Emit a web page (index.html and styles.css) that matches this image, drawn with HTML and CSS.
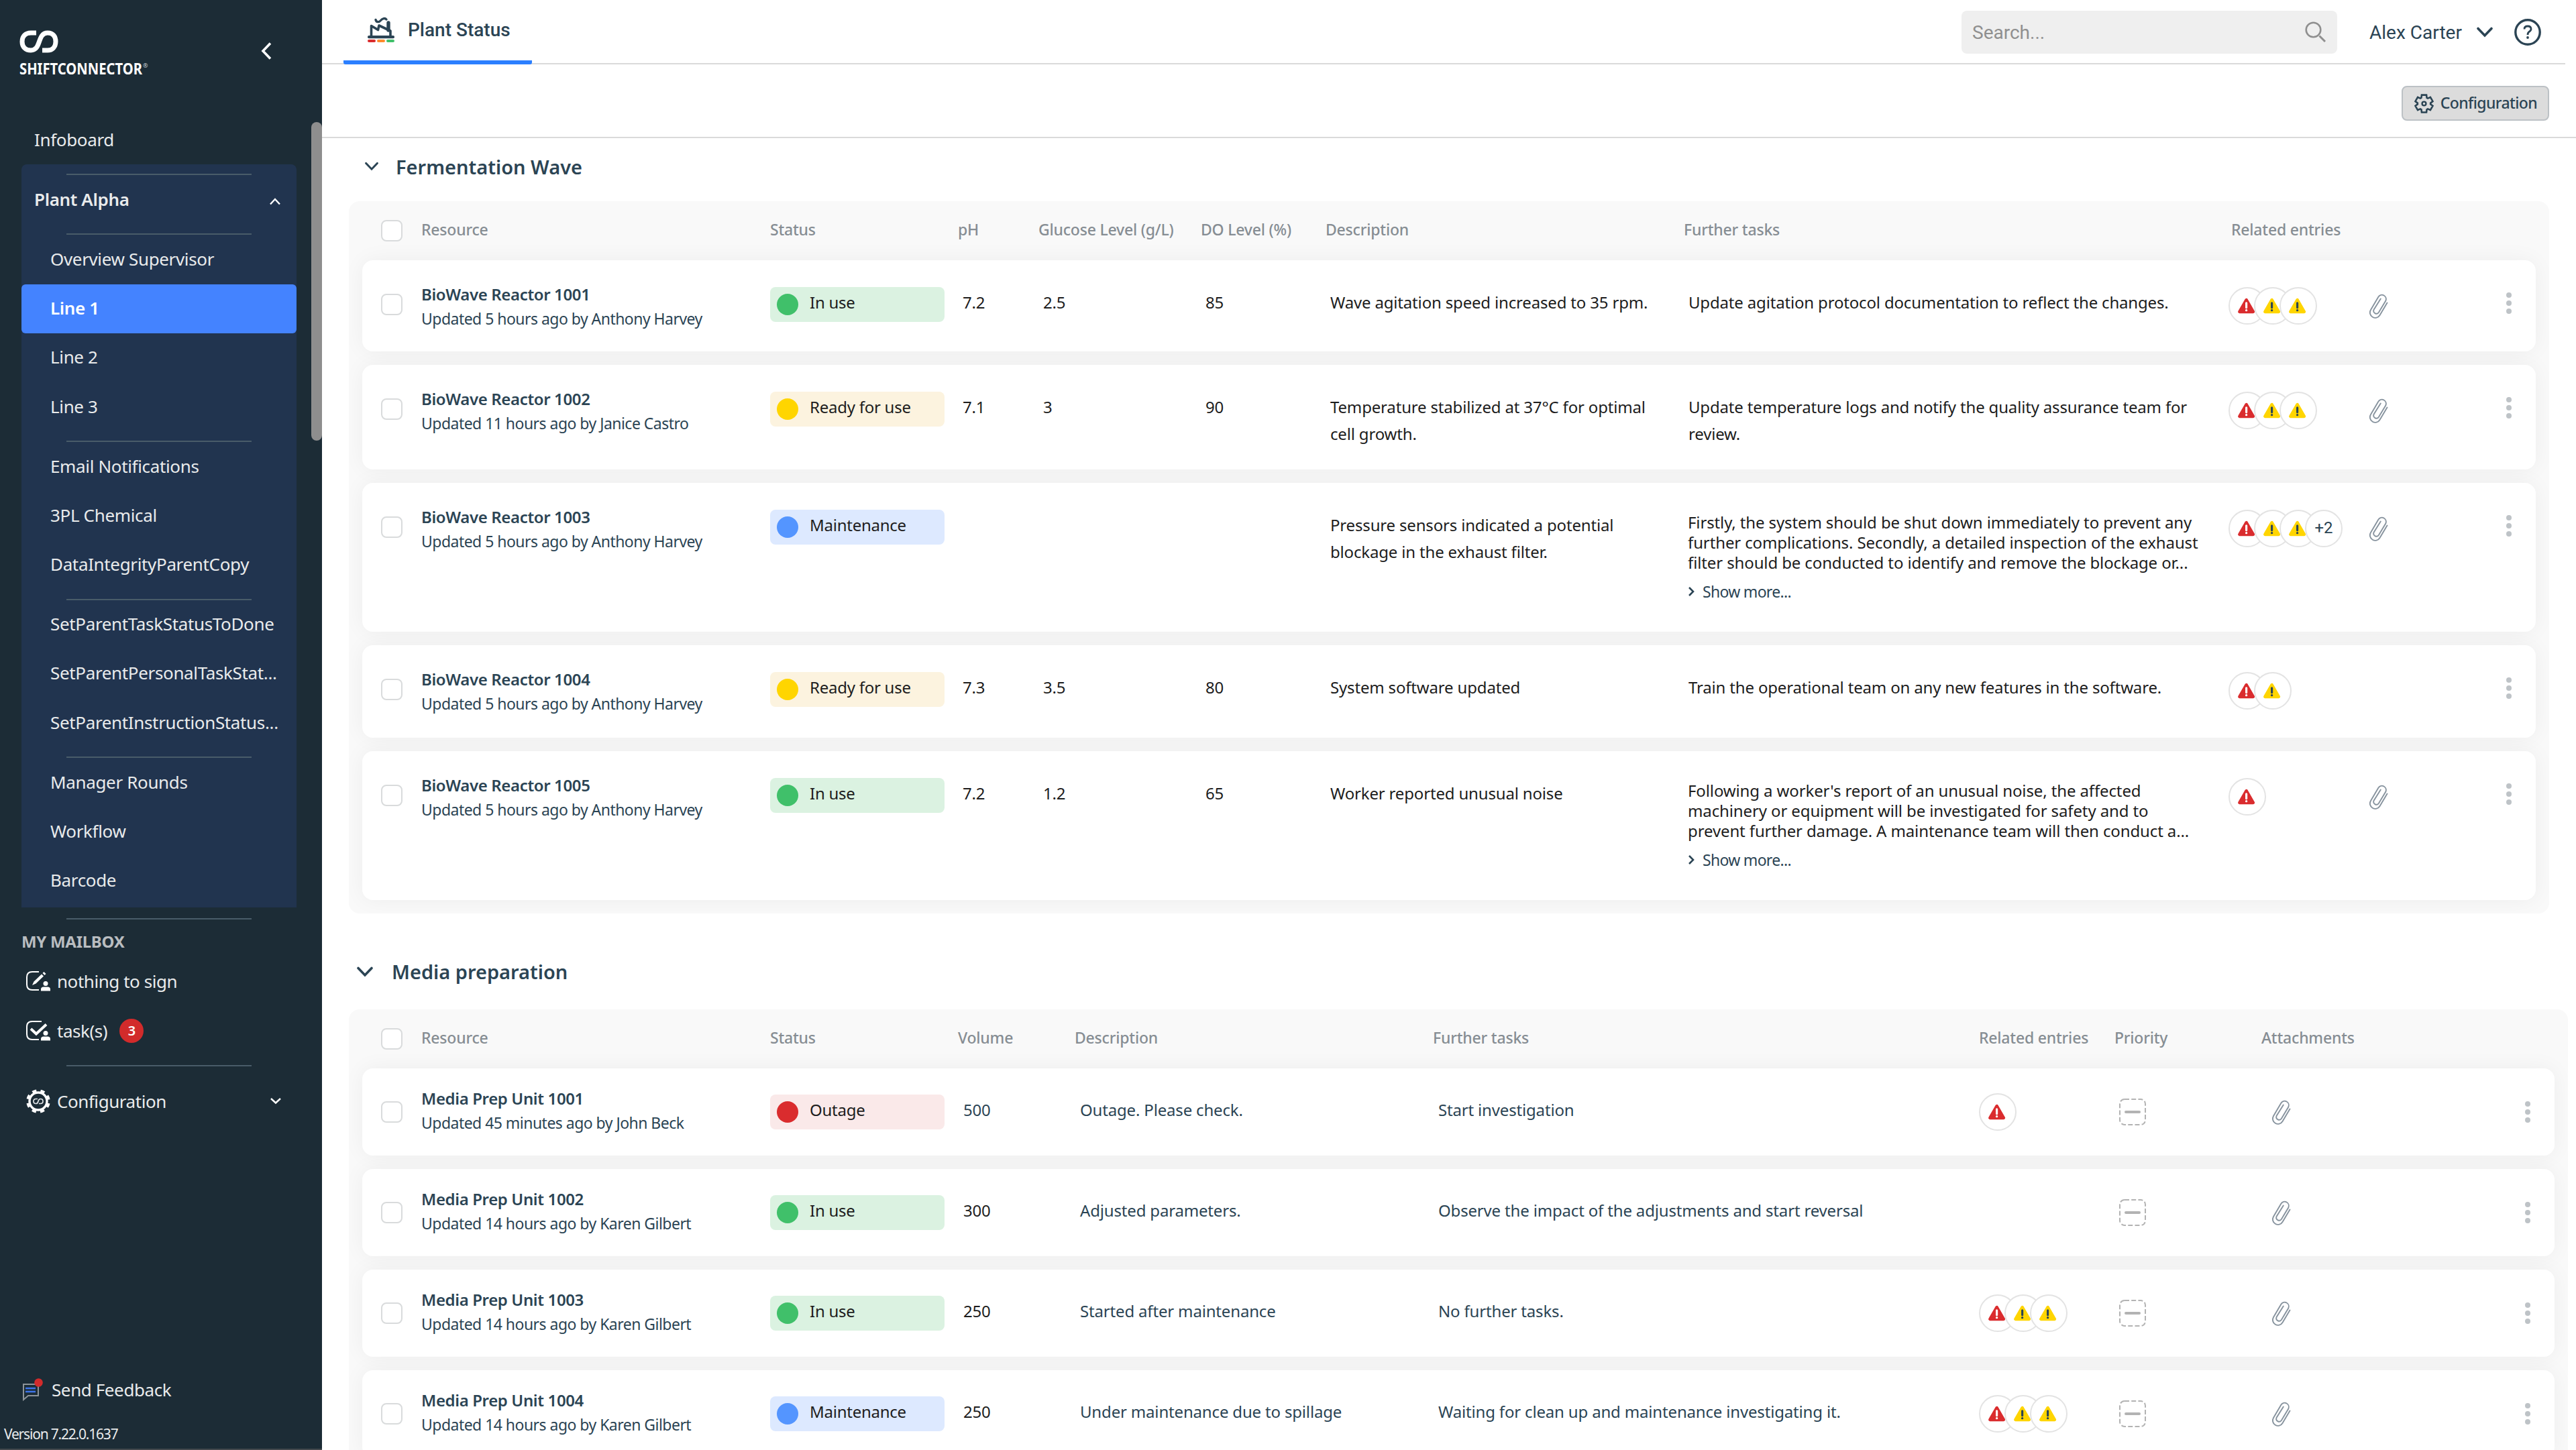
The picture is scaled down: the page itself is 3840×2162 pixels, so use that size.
FILE: index.html
```html
<!DOCTYPE html>
<html lang="en">
<head>
  <meta charset="UTF-8" />
  <meta name="viewport" content="width=device-width, initial-scale=1.0"/>
  <title>Plant Status</title>
  <link rel="stylesheet" href="styles.css">
</head>
<body>
  <!-- shared icons -->
  <svg class="sprite" width="0" height="0">
    <symbol id="alert-red" viewBox="0 0 56 56">
      <path d="M26.5 18.5 L15.5 37.5 H37.5 Z" fill="#da2c2e" stroke="#da2c2e" stroke-width="5" stroke-linejoin="round"/>
      <path d="M26.5 23.5 V31" stroke="#fff" stroke-width="3.4" stroke-linecap="round"/>
      <circle cx="26.5" cy="35.2" r="1.8" fill="#fff"/>
    </symbol>
    <symbol id="alert-yellow" viewBox="0 0 56 56">
      <path d="M26.5 18.5 L15.5 37.5 H37.5 Z" fill="#ffd500" stroke="#ffd500" stroke-width="5" stroke-linejoin="round"/>
      <path d="M26.5 23.5 V31" stroke="#2b4454" stroke-width="3.4" stroke-linecap="round"/>
      <circle cx="26.5" cy="35.2" r="1.8" fill="#2b4454"/>
    </symbol>
    <symbol id="clip" viewBox="0 0 30 40">
      <path d="M28.5 15.5 L17.5 34 A7.8 7.8 0 0 1 4 26 L15.5 6.5 A6.2 6.2 0 0 1 26.3 12.5 L15.8 30 A4.2 4.2 0 0 1 8.6 25.8 L18.8 9.5" fill="none" stroke="#87939e" stroke-width="1.9" stroke-linecap="round"/>
    </symbol>
    <symbol id="dots" viewBox="0 0 8 32">
      <circle cx="4" cy="4" r="4" fill="#bec3c7"/><circle cx="4" cy="16" r="4" fill="#bec3c7"/><circle cx="4" cy="28" r="4" fill="#bec3c7"/>
    </symbol>
    <symbol id="prio" viewBox="0 0 40 40">
      <rect x="1" y="1" width="38" height="38" rx="7" fill="none" stroke="#b3b3b3" stroke-width="2" stroke-dasharray="7 3.2"/>
      <path d="M10 20 H30" stroke="#b3b3b3" stroke-width="4" stroke-linecap="round"/>
    </symbol>
    <symbol id="down" viewBox="0 0 24 16">
      <path d="M2 2.5 L12 13 L22 2.5" fill="none" stroke="currentColor" stroke-width="3.6" stroke-linecap="round"/>
    </symbol>
    <symbol id="person" viewBox="0 0 14 16">
      <circle cx="7" cy="4.5" r="3.5" fill="#fff"/>
      <path d="M0 15.5 V13 Q0 9.5 4 9.5 H10 Q14 9.5 14 13 V15.5 Z" fill="#fff"/>
    </symbol>
  </svg>

  <div class="app">
    <aside class="sidebar">
      <div class="brand">
        <div class="logo">
          <svg class="logo-mark" width="58" height="34" viewBox="0 0 58 34">
            <path d="M25 4 H17 C9 4 4 9 4 17 S9 30 17 30 C33 30 26 4 42 4 C50 4 54 9 54 17 S49 30 42 30 H34" fill="none" stroke="#fff" stroke-width="7"/>
          </svg>
          <svg class="logo-name" width="200" height="40" viewBox="0 0 200 40">
            <text x="0" y="28" font-size="22.5" font-weight="700" textLength="183" lengthAdjust="spacingAndGlyphs" fill="#fff">SHIFTCONNECTOR</text>
            <text x="184" y="18" font-size="9" fill="#c8cdd1">®</text>
          </svg>
        </div>
        <svg class="collapse" width="16" height="26" viewBox="0 0 16 26"><path d="M14 1.5 L3 13 L14 24.5" fill="none" stroke="#fff" stroke-width="3.6"/></svg>
      </div>

      <nav class="menu">
        <a class="item top">Infoboard</a>
        <div class="group">
          <div class="sep"></div>
          <a class="item top bold">Plant Alpha
            <svg class="up" width="16" height="11" viewBox="0 0 16 11"><path d="M1 9.5 L8 2 L15 9.5" fill="none" stroke="#fff" stroke-width="2.4"/></svg>
          </a>
          <div class="sep"></div>
          <a class="item">Overview Supervisor</a>
          <a class="item active">Line 1</a>
          <a class="item">Line 2</a>
          <a class="item">Line 3</a>
          <div class="sep"></div>
          <a class="item">Email Notifications</a>
          <a class="item">3PL Chemical</a>
          <a class="item">DataIntegrityParentCopy</a>
          <div class="sep"></div>
          <a class="item">SetParentTaskStatusToDone</a>
          <a class="item">SetParentPersonalTaskStat...</a>
          <a class="item">SetParentInstructionStatus...</a>
          <div class="sep"></div>
          <a class="item">Manager Rounds</a>
          <a class="item">Workflow</a>
          <a class="item">Barcode</a>
        </div>
        <div class="sep outer"></div>
        <h4 class="mail-title">MY MAILBOX</h4>
        <a class="item icon-item">
          <svg width="36" height="30" viewBox="0 0 36 30">
            <path d="M19 1 H9 Q1 1 1 9 V20 Q1 28 9 28 H19" fill="none" stroke="#fff" stroke-width="2"/>
            <path d="M9 21 L11.5 15.5 L23 4.5 L26 7.5 L14.5 18.5 Z M24.5 3 L26.5 1 L29.5 4 L27.5 6 Z" fill="#fff"/>
            <use href="#person" x="22" y="14" width="14" height="16"/>
          </svg>
          nothing to sign
        </a>
        <a class="item icon-item">
          <svg width="36" height="30" viewBox="0 0 36 30">
            <path d="M23 1 H9 Q1 1 1 9 V20 Q1 28 9 28 H19" fill="none" stroke="#fff" stroke-width="2"/>
            <path d="M7 12 L15 19.5 L30 5.5" fill="none" stroke="#fff" stroke-width="4"/>
            <use href="#person" x="22" y="14" width="14" height="16"/>
          </svg>
          task(s) <span class="badge">3</span>
        </a>
        <div class="sep config-sep"></div>
        <a class="item icon-item config">
          <svg width="36" height="36" viewBox="0 0 36 36">
            <circle cx="18" cy="18" r="13" fill="none" stroke="#fff" stroke-width="3.4"/>
            <circle cx="18" cy="18" r="15.8" fill="none" stroke="#fff" stroke-width="4" stroke-dasharray="6.2 6.21" transform="rotate(11 18 18)"/>
            <path d="M17 14.5 H14.5 C12 14.5 11 16 11 18 S12 21.5 14.5 21.5 C20 21.5 16 14.5 21.5 14.5 C24 14.5 25 16 25 18 S24 21.5 21.5 21.5 H19" fill="none" stroke="#dfe3e6" stroke-width="1.7"/>
          </svg>
          Configuration
          <svg class="end" width="16" height="11" viewBox="0 0 16 11"><path d="M1 2 L8 8.5 L15 2" fill="none" stroke="#fff" stroke-width="2.4"/></svg>
        </a>
      </nav>

      <div class="feedback">
        <svg width="32" height="34" viewBox="0 0 32 34">
          <path d="M2 32 V9 H24 V26 H9 Z" fill="none" stroke="#8d9499" stroke-width="2"/>
          <path d="M5 15 H20 M5 20 H20" stroke="#3d74e8" stroke-width="2.6"/>
          <circle cx="24.5" cy="6.5" r="6.3" fill="#d22b2b"/>
        </svg>
        Send Feedback
      </div>
      <div class="version">Version 7.22.0.1637</div>
      <div class="scrollbar"></div>
    </aside>

    <main class="main">
      <header class="topbar">
        <div class="tab">
          <svg width="40" height="39" viewBox="0 0 40 39">
            <path d="M5.5 29 V13.5 L15.5 19.5 L17 13 L34 21 V29" fill="none" stroke="#2b4454" stroke-width="3.6" stroke-linejoin="round"/>
            <path d="M31 9 V20" stroke="#2b4454" stroke-width="5.4" stroke-linecap="round"/>
            <path d="M12 4.5 C13 8.5 17 8.5 19.5 5.5 S26 1.5 28 4" fill="none" stroke="#2b4454" stroke-width="3.4" stroke-linecap="round"/>
            <rect x="0" y="28" width="40" height="4.2" rx="2" fill="#2b4454"/>
            <rect x="0" y="34" width="12" height="4" rx="2" fill="#da2c2e"/>
            <rect x="14" y="34" width="12" height="4" rx="2" fill="#ff8b2c"/>
            <rect x="28" y="34" width="12" height="4" rx="2" fill="#40c06a"/>
          </svg>
          Plant Status
        </div>
        <div class="tools">
          <div class="search">
            <span>Search...</span>
            <svg width="32" height="32" viewBox="0 0 32 32"><circle cx="12.5" cy="12.5" r="10.8" fill="none" stroke="#8f8f8f" stroke-width="2.6"/><path d="M21.5 21.5 L30 30" stroke="#8f8f8f" stroke-width="3"/></svg>
          </div>
          <div class="user">Alex Carter <svg width="24" height="16"><use href="#down"/></svg></div>
          <svg class="help" width="40" height="40" viewBox="0 0 40 40">
            <circle cx="20" cy="20" r="18.2" fill="none" stroke="#2b4454" stroke-width="3.4"/>
            <path d="M15 15.5 Q15 11 20 11 Q25 11 25 15.2 Q25 17.5 22.3 19.2 Q20 20.8 20 24" fill="none" stroke="#2b4454" stroke-width="2.8"/>
            <circle cx="20" cy="28" r="1.9" fill="#2b4454"/>
          </svg>
        </div>
      </header>

      <div class="actions">
        <button class="btn">
          <svg width="31" height="31" viewBox="0 -960 960 960">
            <path d="m370-80-16-128q-13-5-24.500-12T307-235l-119 50L78-375l103-78q-1-7-1-13.500v-27q0-6.500 1-13.500L78-585l110-190 119 50q11-8 23-15t24-12l16-128h220l16 128q13 5 24.500 12t22.500 15l119-50 110 190-103 78q1 7 1 13.500v27q0 6.500-2 13.500l103 78-110 190-118-50q-11 8-23 15t-24 12L590-80H370Z" fill="none" stroke="#2b4454" stroke-width="80"/>
            <circle cx="480" cy="-480" r="90" fill="none" stroke="#2b4454" stroke-width="75"/>
          </svg>
          <span>Configuration</span>
        </button>
      </div>

      <h2 class="title"><svg width="20" height="14"><use href="#down"/></svg>Fermentation Wave</h2>
      <section class="panel fermentation">
        <div class="head grid">
          <i class="check"></i><span>Resource</span><span>Status</span><span>pH</span><span>Glucose Level (g/L)</span><span>DO Level (%)</span><span>Description</span><span>Further tasks</span><span class="rel">Related entries</span>
        </div>

        <div class="card grid">
          <i class="check"></i>
          <div class="res"><b>BioWave Reactor 1001</b><small>Updated 5 hours ago by Anthony Harvey</small></div>
          <div class="status green">In use</div>
          <p>7.2</p><p>2.5</p><p>85</p>
          <p>Wave agitation speed increased to 35 rpm.</p>
          <p>Update agitation protocol documentation to reflect the changes.</p>
          <div class="alerts"><svg><use href="#alert-red"/></svg><svg><use href="#alert-yellow"/></svg><svg><use href="#alert-yellow"/></svg></div>
          <svg class="clip"><use href="#clip"/></svg>
          <svg class="dots"><use href="#dots"/></svg>
        </div>

        <div class="card grid">
          <i class="check"></i>
          <div class="res"><b>BioWave Reactor 1002</b><small>Updated 11 hours ago by Janice Castro</small></div>
          <div class="status yellow">Ready for use</div>
          <p>7.1</p><p>3</p><p>90</p>
          <p>Temperature stabilized at 37°C for optimal<br>cell growth.</p>
          <p>Update temperature logs and notify the quality assurance team for<br>review.</p>
          <div class="alerts"><svg><use href="#alert-red"/></svg><svg><use href="#alert-yellow"/></svg><svg><use href="#alert-yellow"/></svg></div>
          <svg class="clip"><use href="#clip"/></svg>
          <svg class="dots"><use href="#dots"/></svg>
        </div>

        <div class="card grid">
          <i class="check"></i>
          <div class="res"><b>BioWave Reactor 1003</b><small>Updated 5 hours ago by Anthony Harvey</small></div>
          <div class="status blue">Maintenance</div>
          <p></p><p></p><p></p>
          <p>Pressure sensors indicated a potential<br>blockage in the exhaust filter.</p>
          <div class="long">
            Firstly, the system should be shut down immediately to prevent any<br>further complications. Secondly, a detailed inspection of the exhaust<br>filter should be conducted to identify and remove the blockage or...
            <a class="more"><svg width="10" height="16" viewBox="0 0 10 16"><path d="M2 2 L8 8 L2 14" fill="none" stroke="#2b4454" stroke-width="2.6"/></svg>Show more...</a>
          </div>
          <div class="alerts"><svg><use href="#alert-red"/></svg><svg><use href="#alert-yellow"/></svg><svg><use href="#alert-yellow"/></svg><span>+2</span></div>
          <svg class="clip"><use href="#clip"/></svg>
          <svg class="dots"><use href="#dots"/></svg>
        </div>

        <div class="card grid no-files">
          <i class="check"></i>
          <div class="res"><b>BioWave Reactor 1004</b><small>Updated 5 hours ago by Anthony Harvey</small></div>
          <div class="status yellow">Ready for use</div>
          <p>7.3</p><p>3.5</p><p>80</p>
          <p>System software updated</p>
          <p>Train the operational team on any new features in the software.</p>
          <div class="alerts"><svg><use href="#alert-red"/></svg><svg><use href="#alert-yellow"/></svg></div>
          <span></span>
          <svg class="dots"><use href="#dots"/></svg>
        </div>

        <div class="card grid">
          <i class="check"></i>
          <div class="res"><b>BioWave Reactor 1005</b><small>Updated 5 hours ago by Anthony Harvey</small></div>
          <div class="status green">In use</div>
          <p>7.2</p><p>1.2</p><p>65</p>
          <p>Worker reported unusual noise</p>
          <div class="long">
            Following a worker's report of an unusual noise, the affected<br>machinery or equipment will be investigated for safety and to<br>prevent further damage. A maintenance team will then conduct a...
            <a class="more"><svg width="10" height="16" viewBox="0 0 10 16"><path d="M2 2 L8 8 L2 14" fill="none" stroke="#2b4454" stroke-width="2.6"/></svg>Show more...</a>
          </div>
          <div class="alerts"><svg><use href="#alert-red"/></svg></div>
          <svg class="clip"><use href="#clip"/></svg>
          <svg class="dots"><use href="#dots"/></svg>
        </div>
      </section>

      <h2 class="title second"><svg width="24" height="16"><use href="#down"/></svg>Media preparation</h2>
      <section class="panel media">
        <div class="head grid">
          <i class="check"></i><span>Resource</span><span>Status</span><span>Volume</span><span>Description</span><span>Further tasks</span><span>Related entries</span><span>Priority</span><span>Attachments</span>
        </div>

        <div class="card grid">
          <i class="check"></i>
          <div class="res"><b>Media Prep Unit 1001</b><small>Updated 45 minutes ago by John Beck</small></div>
          <div class="status red">Outage</div>
          <p class="link">500</p>
          <p class="link">Outage. Please check.</p>
          <p class="link">Start investigation</p>
          <div class="alerts"><svg><use href="#alert-red"/></svg></div>
          <svg class="prio"><use href="#prio"/></svg>
          <svg class="clip"><use href="#clip"/></svg>
          <svg class="dots"><use href="#dots"/></svg>
        </div>

        <div class="card grid">
          <i class="check"></i>
          <div class="res"><b>Media Prep Unit 1002</b><small>Updated 14 hours ago by Karen Gilbert</small></div>
          <div class="status green">In use</div>
          <p>300</p>
          <p class="link">Adjusted parameters.</p>
          <p class="link">Observe the impact of the adjustments and start reversal</p>
          <div class="alerts"></div>
          <svg class="prio"><use href="#prio"/></svg>
          <svg class="clip"><use href="#clip"/></svg>
          <svg class="dots"><use href="#dots"/></svg>
        </div>

        <div class="card grid">
          <i class="check"></i>
          <div class="res"><b>Media Prep Unit 1003</b><small>Updated 14 hours ago by Karen Gilbert</small></div>
          <div class="status green">In use</div>
          <p>250</p>
          <p class="link">Started after maintenance</p>
          <p class="link">No further tasks.</p>
          <div class="alerts"><svg><use href="#alert-red"/></svg><svg><use href="#alert-yellow"/></svg><svg><use href="#alert-yellow"/></svg></div>
          <svg class="prio"><use href="#prio"/></svg>
          <svg class="clip"><use href="#clip"/></svg>
          <svg class="dots"><use href="#dots"/></svg>
        </div>

        <div class="card grid">
          <i class="check"></i>
          <div class="res"><b>Media Prep Unit 1004</b><small>Updated 14 hours ago by Karen Gilbert</small></div>
          <div class="status blue">Maintenance</div>
          <p>250</p>
          <p class="link">Under maintenance due to spillage</p>
          <p class="link">Waiting for clean up and maintenance investigating it.</p>
          <div class="alerts"><svg><use href="#alert-red"/></svg><svg><use href="#alert-yellow"/></svg><svg><use href="#alert-yellow"/></svg></div>
          <svg class="prio"><use href="#prio"/></svg>
          <svg class="clip"><use href="#clip"/></svg>
          <svg class="dots"><use href="#dots"/></svg>
        </div>
      </section>
    </main>
  </div>
</body>
</html>
```

FILE: styles.css
```css
* {
  box-sizing: border-box;
}
body, html {
  margin: 0;
  padding: 0;
  height: 100%;
  overflow: hidden;
  background: #fff;
  color: #1d1d1d;
  font-family: "Noto Sans", "Open Sans", sans-serif;
  font-size: 24px;
}
p, h2, h4 {
  margin: 0;
}
svg {
  display: block;
  flex: none;
}
.sprite {
  position: absolute;
}
.app {
  display: flex;
  height: 100vh;
}

/* sidebar */
.sidebar {
  position: relative;
  width: 480px;
  flex: none;
  display: flex;
  flex-direction: column;
  background: #1c2c36;
  border-bottom: 2px solid #43494d;
  color: #e9ebec;
  overflow: hidden;
}
.brand {
  display: flex;
  justify-content: space-between;
  height: 172px;
  padding: 45px 75px 0 29px;
}
.logo {
  width: 200px;
}
.logo-name {
  margin-top: 4px;
}
.collapse {
  margin-top: 18px;
}
.menu {
  padding: 0 38px 0 32px;
}
.item {
  display: flex;
  align-items: center;
  height: 73.2px;
  padding: 0 24px 2px 43px;
  font-size: 26px;
  letter-spacing: -0.35px;
  white-space: nowrap;
}
.item.top {
  padding-left: 19px;
  justify-content: space-between;
}
.item .up {
  margin-top: 7px;
}
.item.bold, .item.active {
  font-weight: 600;
}
.item.active {
  background: #4483ff;
  border-radius: 6px;
  color: #fff;
}
.group {
  background: #21344f;
  border-radius: 8px 8px 0 0;
  padding-bottom: 3px;
}
.sep {
  height: 16px;
  margin: 0 67px;
  border-bottom: 2px solid #495c69;
}
.sep.outer {
  height: 18px;
}
.mail-title {
  height: 56px;
  padding-top: 16px;
  font-size: 24px;
  line-height: 34px;
  letter-spacing: -0.3px;
  color: #b9bdc0;
}
.icon-item {
  padding: 0 23px 0 7px;
  gap: 10px;
  letter-spacing: -0.45px;
}
.icon-item .end {
  margin-left: auto;
}
.badge {
  width: 36px;
  height: 36px;
  margin-left: 8px;
  border-radius: 50%;
  background: #d22b2b;
  color: #fff;
  font-size: 20px;
  font-weight: 600;
  line-height: 36px;
  text-align: center;
}
.config-sep {
  height: 17px;
}
.config {
  margin-top: 15px;
}
.feedback {
  display: flex;
  align-items: center;
  gap: 12px;
  margin-top: auto;
  padding: 0 0 2px 33px;
  height: 60px;
  font-size: 26px;
  letter-spacing: -0.4px;
}
.version {
  padding-left: 6px;
  margin-top: 17px;
  margin-bottom: 4px;
  font-size: 21px;
  line-height: 36px;
  letter-spacing: -1.2px;
}
.scrollbar {
  position: absolute;
  top: 182px;
  right: 0;
  width: 16px;
  height: 475px;
  border-radius: 8px;
  background: #8e8e8e;
}

/* top bar */
.main {
  flex: 1;
  min-width: 0;
}
.topbar {
  display: flex;
  justify-content: space-between;
  height: 96px;
  margin-right: 16px;
  padding-left: 32px;
  border-bottom: 2px solid #dadada;
  font-family: Roboto, sans-serif;
  font-size: 28px;
  color: #2b4454;
}
.tab {
  display: flex;
  align-items: center;
  gap: 20px;
  width: 281px;
  height: 96px;
  padding: 0 0 1px 36px;
  border-bottom: 6px solid #2b7fff;
  border-radius: 3px;
  font-weight: 500;
}
.tools {
  display: flex;
  align-items: center;
  padding: 2px 36px 0 0;
}
.search {
  display: flex;
  align-items: center;
  justify-content: space-between;
  width: 560px;
  height: 64px;
  padding: 0 16px;
  border-radius: 8px;
  background: #efefef;
  color: #8f8f8f;
}
.user {
  display: flex;
  align-items: center;
  justify-content: space-between;
  width: 184px;
  margin: 0 32px 0 48px;
}
.actions {
  display: flex;
  justify-content: flex-end;
  height: 110px;
  padding: 32px 40px 0 0;
  border-bottom: 2px solid #dadada;
}
.btn {
  display: flex;
  align-items: center;
  justify-content: center;
  gap: 9px;
  width: 220px;
  height: 52px;
  padding: 0;
  border: 2px solid #bcc1c5;
  border-radius: 8px;
  background: #dcdcdc;
  color: #2b4454;
  font: 500 23px "Noto Sans", sans-serif;
  letter-spacing: -0.6px;
}
.btn span {
  padding-bottom: 3px;
}

/* tables */
.title {
  display: flex;
  align-items: center;
  gap: 26px;
  height: 94px;
  padding: 0 0 10px 64px;
  font-size: 29px;
  font-weight: 600;
  color: #2b4454;
}
.title.second {
  gap: 28px;
  height: 143px;
  padding: 30px 0 0 52px;
}
.panel {
  margin-left: 40px;
  padding: 0 20px 20px;
  border-radius: 16px;
  background: #f9f9f9;
  overflow: hidden;
}
.fermentation {
  width: 3280px;
}
.media {
  width: 3308px;
}
.grid {
  display: grid;
  padding-left: 28px;
  align-items: start;
}
.fermentation .grid {
  grid-template-columns: 60px 520px 280px 120px 242px 186px 534px 812px 208px 206px 8px;
}
.media .grid {
  grid-template-columns: 60px 520px 280px 174px 534px 814px 202px 219px 393px 8px;
}
.head {
  height: 88px;
  padding-top: 28px;
  font-size: 23px;
  font-weight: 500;
  line-height: 28px;
  letter-spacing: -0.2px;
  color: #868d93;
}
.head .rel {
  padding-left: 4px;
}
.check {
  width: 32px;
  height: 32px;
  border: 2px solid #d9dbdc;
  border-radius: 8px;
  background: #fff;
}
.card {
  min-height: 136px;
  margin-bottom: 20px;
  border-radius: 16px;
  background: #fff;
  box-shadow: 0 0 32px rgba(0, 0, 0, 0.05);
}
.card.no-files {
  min-height: 138px;
}
.card:last-child {
  margin-bottom: 0;
}
.card .check {
  margin-top: 50px;
}
.res {
  padding-top: 33px;
  color: #2b4454;
}
.res b {
  display: block;
  font-size: 24px;
  font-weight: 600;
  line-height: 36px;
  letter-spacing: -0.37px;
}
.res small {
  display: block;
  font-size: 23px;
  line-height: 37px;
  letter-spacing: -0.53px;
}
.status {
  display: flex;
  align-items: center;
  gap: 17px;
  width: 260px;
  height: 52px;
  margin-top: 40px;
  padding-left: 10px;
  border-radius: 8px;
  line-height: 46px;
  letter-spacing: -0.25px;
}
.status::before {
  content: "";
  width: 32px;
  height: 32px;
  border-radius: 50%;
}
.green { background: #dbf2e1; }
.green::before { background: #40c06a; }
.yellow { background: #fcf3df; }
.yellow::before { background: #ffd500; }
.blue { background: #dde9ff; }
.blue::before { background: #5495ff; }
.red { background: #fae9e9; }
.red::before { background: #da2c2e; }
/* label sits a little above the dot */
.status {
  align-items: flex-start;
}
.status::before {
  margin-top: 10px;
}

.card p {
  padding: 43px 0 33px 7px;
  line-height: 40px;
  letter-spacing: -0.17px;
  white-space: nowrap;
}
.card p.link {
  color: #2b4454;
}
.long {
  padding: 44px 0 38px 6px;
  line-height: 30px;
  letter-spacing: -0.12px;
  white-space: nowrap;
}
.more {
  display: flex;
  align-items: center;
  gap: 12px;
  height: 40px;
  margin-top: 8px;
  margin-bottom: 2px;
  font-size: 23px;
  letter-spacing: -0.7px;
  color: #2b4454;
}
.alerts {
  display: flex;
  padding-top: 40px;
}
.alerts svg, .alerts span {
  width: 56px;
  height: 56px;
  margin-right: -18px;
  border: 2px solid #e3e3e3;
  border-radius: 50%;
  background: #fff;
}
.alerts span {
  font: 24px/50px Roboto, sans-serif;
  text-align: center;
  color: #2b4454;
}
.clip {
  width: 30px;
  height: 40px;
  margin-top: 48px;
}
.dots {
  width: 8px;
  height: 32px;
  margin-top: 48px;
}
.prio {
  width: 40px;
  height: 40px;
  margin: 45px 0 0 7px;
}

/* compact rows */
.media .card {
  min-height: 130px;
}
.media .card .check { margin-top: 49px; }
.media .res { padding-top: 27px; }
.media .status { margin-top: 39px; }
.media .card p { padding: 42px 0 0 8px; }
.media .alerts { padding-top: 37px; }
.media .clip { margin: 45px 0 0 14px; }
.media .dots { margin-top: 49px; }
```
